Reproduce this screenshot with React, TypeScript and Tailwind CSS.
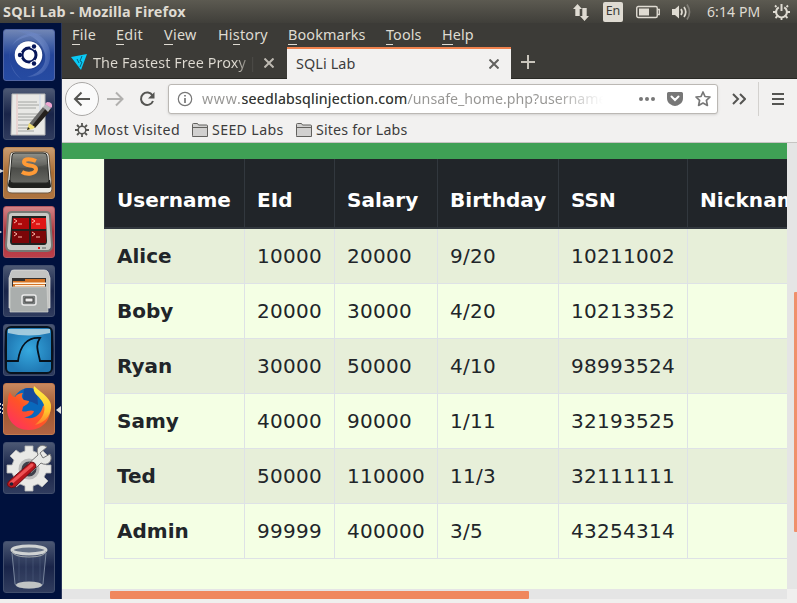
import type { ReactNode } from "react";

const employees = [
  ["Alice", "10000", "20000", "9/20", "10211002", ""],
  ["Boby", "20000", "30000", "4/20", "10213352", ""],
  ["Ryan", "30000", "50000", "4/10", "98993524", ""],
  ["Samy", "40000", "90000", "1/11", "32193525", ""],
  ["Ted", "50000", "110000", "11/3", "32111111", ""],
  ["Admin", "99999", "400000", "3/5", "43254314", ""],
];
const columns = ["Username", "EId", "Salary", "Birthday", "SSN", "Nickname"];

function TopPanel() {
  return (
    <header className="flex h-[23px] shrink-0 items-center bg-linear-to-b from-[#5c5a51] to-[#403f3a] pl-[3px] text-[#dfdbd2]">
      <div className="w-[569px] text-[14.4px] leading-[22px] font-bold tracking-[0.2px] whitespace-nowrap">SQLi Lab - Mozilla Firefox</div>
      <svg width="18" height="18" viewBox="0 0 18 18" fill="currentColor" className="shrink-0">
        <path d="M5.5 1 10 6H7.700v7H3.300V6H1zM12.500 18 8 13h2.300V5h4.400v8H17z" />
      </svg>
      <div className="ml-[13px] flex h-5 w-5 shrink-0 items-center justify-center rounded-[2px] bg-[#dfdbd2] text-[12.500px] text-[#3c3b37]">En</div>
      <svg width="25" height="14" viewBox="0 0 25 14" className="ml-[13px] shrink-0">
        <rect x=".75" y="1.500" width="20.500" height="11" rx="1.500" fill="none" stroke="#dfdbd2" strokeWidth="1.400" />
        <path d="M3 3.500h10v7H3z" fill="#dfdbd2" />
        <path d="M22 4.500h1.300v5H22" fill="none" stroke="#dfdbd2" strokeWidth="1.300" />
      </svg>
      <svg width="20" height="18" viewBox="0 0 20 18" fill="none" stroke="#dfdbd2" strokeWidth="1.700" className="ml-[11px] shrink-0">
        <path d="M0 6h3l4-3.500v13L3 12H0z" fill="#dfdbd2" stroke="none" />
        <path d="M9 6q2 3 0 6M12 4q3.500 5 0 10" />
        <path d="M15 1.500q5 7.500 0 15" stroke="#817e77" />
      </svg>
      <div className="ml-[15px] w-[66px] text-[14px] leading-[22px] tracking-[0.1px] whitespace-nowrap">6:14 PM</div>
      <svg width="17" height="18" viewBox="0 0 17 18" fill="none" stroke="#dfdbd2" className="shrink-0">
        <path d="M5.800 4.300a5.400 5.400 0 1 0 5.400 0" strokeWidth="2" />
        <path d="M8.500 1v7" strokeWidth="2" />
        <path d="M3.500 4 2 2.500m11.500 1.500L15 2.500M3 9H0m17 0h-3M4.500 13 2.500 15m10-2 2 2M8.500 14v3" strokeWidth="1.800" />
      </svg>
    </header>
  );
}

function Tile({ tone, children, className = "" }: { tone: string; children: ReactNode; className?: string }) {
  return (
    <div className={`relative h-[52px] w-[52px] shrink-0 rounded-[3px] border bg-linear-to-b ${tone} ${className}`}>
      <svg width="50" height="50" viewBox="0 0 50 50" className="overflow-visible">{children}</svg>
    </div>
  );
}

const slate = "border-[#414e6c] from-[#4c5873] via-[#192449] to-[#303c5e]";

function Launcher() {
  return (
    <aside className="flex h-[576px] w-[62px] shrink-0 flex-col gap-[7px] border-r border-[#29365a] bg-[#00113d] pt-[6px] pl-[3px]">
      <Tile tone="border-[#5065a4] from-[#7186b5] via-[#24459a] to-[#264ba2]">
        <defs>
          <radialGradient id="swirl">
            <stop stopColor="#a4b8e5" />
            <stop offset="1" stopColor="#6b86c8" stopOpacity=".45" />
          </radialGradient>
        </defs>
        <path d="M13 1c17-3 36 9 33 28-2 13-12 18-23 18 16-5 21-15 17-26C36 9 25 4 13 1z" fill="url(#swirl)" opacity=".8" />
        <path d="M8 16C2 29 8 40 17 49 7 42 2 27 9 14 15 4 30 1 38 5 23 5 12 9 8 16z" fill="url(#swirl)" />
        <circle cx="25" cy="25" r="14.500" fill="#182d6b" opacity=".45" />
        <circle cx="24.500" cy="25" r="13.800" fill="white" />
        <circle cx="25" cy="25" r="7" fill="none" stroke="#07175a" strokeWidth="3" />
        <path d="M18 25h-4M28.500 18.900l2-3.400M28.500 31.100l2 3.400" stroke="white" strokeWidth="5.500" />
        <g fill="#07175a">
          <circle cx="16" cy="25" r="2.200" />
          <circle cx="30" cy="16.500" r="2.200" />
          <circle cx="30" cy="33.500" r="2.200" />
        </g>
      </Tile>
      <Tile tone={slate}>
        <path d="M8 5h33v41H7z" fill="#e8e8e5" stroke="#b7b9b8" />
        <path d="M13 5v41" stroke="#e9aaaa" strokeWidth=".6" />
        <path d="M36 5v25" stroke="#b9ccee" strokeWidth=".6" />
        <path d="M14 13h19m-19 3h21m-21 3h18m-18 6h20m-20 3h17m-17 3h20m-20 5h15m-15 3h14m-14 3h16" stroke="#929493" strokeWidth=".8" />
        <path d="m25 35 14-17 5 3-14 17z" fill="#686867" />
        <path d="m27 38 16-20 4 3-16 18z" fill="#25211d" />
        <path d="m39 18 3-3 5 4-3 4z" fill="#b7b9bd" />
        <path d="m41 15 2-2q6 0 5 5l-1 1z" fill="#efa6d0" />
        <path d="m23 41 2-7 6 4-2 2z" fill="#f0df76" />
        <path d="m23 41 1-3 2 2z" fill="#222" />
      </Tile>
      <Tile tone="border-[#ba8650] from-[#c99c70] via-[#a96c32] to-[#ad7440]">
        <defs>
          <linearGradient id="keycap" x2="0" y2="1"><stop stopColor="#92938c" /><stop offset=".5" stopColor="#4b4c48" /><stop offset="1" stopColor="#666762" /></linearGradient>
        </defs>
        <path d="M6 7q0-3 4-3h31q3 0 4 3l3 34q0 4-4 4H8q-5 0-5-4z" fill="#ebeae5" stroke="#6d5943" />
        <path d="M5 32h41l1 6q0 2-3 2H8q-4 0-4-3z" fill="#20211e" />
        <path d="M8 8q0-3 3-3h28q4 0 4 3l2 25q0 2-3 2H9q-3 0-3-3z" fill="url(#keycap)" stroke="#292a27" />
        <path d="M8 12q16 2 35-3l1 7q-18 6-37 3z" fill="#aaaaa4" opacity=".15" />
        <path d="M32 13c-4-2-12-3-12 1 0 5 12 2 12 7 0 5-9 6-14 3" fill="none" stroke="#ff9a36" strokeWidth="4" />
        <path d="m0 23-4-2v4z" fill="#d5d5d5" />
      </Tile>
      <Tile tone="border-[#b25761] from-[#d18387] via-[#a82e39] to-[#bb3f49]">
        <path d="M8 5h34q4 0 4 4l2 29q0 6-5 6H7q-5 0-5-6L4 9q0-4 4-4z" fill="#c8c9c4" stroke="#777873" strokeWidth="2" />
        <path d="M8 9h34v3l1 22q0 4-3 4H9q-3 0-3-4z" fill="#202220" />
        <path d="M9 11h16v11H8z" fill="#ad080b" />
        <path d="M27 11h15v11H27z" fill="#e01716" />
        <path d="M8 24h17v12H8zM27 24h15v12H27z" fill="#7b0608" />
        <g fill="none" stroke="#ffb6a8" strokeWidth="1">
          <path d="m10 12 3 2-3 2m4 1h4M28 12l3 2-3 2m4 1h4M10 25l3 2-3 2m4 1h4M28 25l3 2-3 2m4 1h4" />
        </g>
        <path d="M34 41h2" stroke="#ed1915" strokeWidth="2" />
        <path d="M38 41h4" stroke="#929490" strokeWidth="2" />
        <path d="m-2 25-3-2v4z" fill="#d5d5d5" />
      </Tile>
      <Tile tone={slate}>
        <path d="M7 6q0-2 3-2h30q3 0 4 2l2 6v30H5V12z" fill="#c3c4c2" stroke="#e4e5e3" strokeWidth=".7" />
        <path d="M8 12h34v14H8z" fill="#34312f" />
        <path d="M9 15h12v-2h20v10H9z" fill="#d57324" />
        <path d="M9 16.500h33V18H9zM11 19h30v1.500H11z" fill="#fff0dd" />
        <path d="M6 21h37l1 25H6z" fill="#aaaead" stroke="#d4d5d3" strokeWidth=".7" />
        <rect x="18" y="29" width="14" height="10" rx="2" fill="#777b7b" stroke="#ececec" strokeWidth="1.500" />
        <path d="M21 32h8v4h-8z" fill="#eee" stroke="#444" />
      </Tile>
      <Tile tone={slate}>
        <defs><radialGradient id="ocean"><stop stopColor="#36a9df" /><stop offset="1" stopColor="#2079b4" /></radialGradient></defs>
        <rect x="2" y="2" width="46" height="46" rx="5" fill="url(#ocean)" stroke="#07121d" strokeWidth="2" />
        <path d="M4 4h42v4Q25 13 4 8z" fill="#c1dce5" opacity=".8" />
        <path d="M3 36h11C16 20 24 12 36 13c-5 7-2 13 0 23h12" fill="none" stroke="#07121d" strokeWidth="1.800" />
      </Tile>
      <Tile tone="border-[#c1794d] from-[#c8885f] via-[#9f582f] to-[#b26444]">
        <defs>
          <linearGradient id="fox" x1="0" y1="1" x2="1" y2="0"><stop stopColor="#ff286e" /><stop offset=".5" stopColor="#ff5426" /><stop offset="1" stopColor="#ff9a24" /></linearGradient>
          <linearGradient id="tail" x2="0" y2="1"><stop stopColor="#fff044" /><stop offset=".65" stopColor="#ffc52d" /><stop offset="1" stopColor="#ff792b" /></linearGradient>
        </defs>
        <circle cx="25" cy="20" r="16" fill="#0968bc" />
        <path d="M20 5q8-3 13 3l1 13-6-3-9-2z" fill="#154a9b" />
        <path d="M6 8c1 3 3 5 5 5 2-3 5-4 8-4-2 3-1 5 1 7l5 1c0 3-4 4-6 6l-1 4c4 2 7-2 12 0-1 4-6 6-10 6 9 4 17-2 19-11l7-4c3 17-7 28-21 28C10 46 0 34 4 18c0-4 0-7 2-10z" fill="url(#fox)" />
        <path d="M30 2c-2 7 4 9 8 15 6 9 0 18-7 24 9-2 15-8 16-17C48 15 40 11 30 2z" fill="url(#tail)" />
        <path d="m57 22-5 4 5 4z" fill="#ddd" />
        <path d="M-3.500 19v2m0 2v2m0 2v2m2-9v2m0 2v2m0 2v2" stroke="#d5d5d5" />
      </Tile>
      <Tile tone={slate}>
        <g stroke="#b8b9b7" strokeWidth=".8">
          <path d="M21 3h8v5l5 2 4-3 6 6-4 4 2 5h5v8h-5l-2 4 4 4-6 6-4-3-5 2v5h-8v-5l-5-2-4 3-6-6 4-4-2-4H3v-8h5l2-5-4-4 6-6 4 3 5-2z" fill="#e9e9e6" />
          <circle cx="25" cy="26" r="9" fill="#3e404b" stroke="#bbb" strokeWidth="3" />
        </g>
        <path d="m24 21 10-9c-3-8 3-12 9-8l-7 6 3 5 7-4c4 7-3 13-9 9L27 30z" fill="#e7e8e5" stroke="#777" />
        <path d="M5 38 27 19q5 0 5 5L11 44q-4 2-7-1-2-2 1-5z" fill="#ba171d" stroke="#681019" />
        <path d="m7 40 21-18" stroke="#ee5355" strokeWidth="3" strokeLinecap="round" />
        <circle cx="7.500" cy="41" r="1.800" fill="#202236" />
      </Tile>
      <Tile tone={slate} className="mt-10">
        <path d="m8 11 3 31q1 4 14 4t14-4l3-31" fill="#8795a8" fillOpacity=".15" stroke="#77849b" />
        <path d="M15 13v26M22 13v26M29 13v26M36 13v26" stroke="#536180" strokeWidth=".5" />
        <ellipse cx="25" cy="8" rx="17" ry="4" fill="#647085" stroke="#d0d3d3" strokeWidth="3" />
        <path d="M8 9q1 6 17 6t17-6" fill="none" stroke="#a4aaad" />
        <ellipse cx="25" cy="43" rx="13" ry="3.500" fill="#c1c4c4" />
      </Tile>
    </aside>
  );
}

function MenuItem({ initial, rest, before = "", width }: { initial: string; rest: string; before?: string; width: string }) {
  return (
    <span className={`shrink-0 whitespace-nowrap ${width}`}>
      {before}<span className="border-b border-[#dfdbd2] leading-[16px]">{initial}</span>{rest}
    </span>
  );
}

function Close({ className }: { className: string }) {
  return <svg width="10" height="10" viewBox="0 0 10 10" className={`shrink-0 ${className}`} stroke="currentColor" strokeWidth="2"><path d="m.5.5 9 9m0-9-9 9" /></svg>;
}

function Tabs() {
  return (
    <div className="flex h-8 shrink-0 border-b border-[#292925] text-[14.400px] text-[#dfdbd2]">
      <div className="flex w-[225px] shrink-0 items-center pl-[9px]">
        <svg width="17" height="17" viewBox="0 0 17 17" className="shrink-0">
          <path d="m0 3 16-3-6 16z" fill="#0acaf5" />
          <path d="m11 2-2 5 2 1-2 5m-3-8 2 4" stroke="#066583" fill="none" />
        </svg>
        <div className="ml-[5px] w-[162px] overflow-hidden bg-linear-to-r from-[#dfdbd2] from-88% to-[#3c3b37] bg-clip-text tracking-[0.08px] whitespace-nowrap text-transparent">The Fastest Free Proxy<span className="-ml-px">{" "}|</span></div>
        <Close className="ml-[9px] text-[#bdb9b1]" />
      </div>
      <div className="-mb-px flex w-[224px] shrink-0 items-center border-t-2 border-[#f0824e] bg-[#f2f1f0] pr-[12px] pb-[1px] pl-[9px] text-[#3c3c3c]">
        <span className="flex-1 tracking-[0.1px]">SQLi Lab</span>
        <Close className="text-[#62625f]" />
      </div>
      <svg width="14" height="14" viewBox="0 0 14 14" className="mt-[8px] ml-[10px]" stroke="#c9c5bc" strokeWidth="2"><path d="M7 0v14M0 7h14" /></svg>
    </div>
  );
}

function Folder() {
  return <svg width="16" height="14" viewBox="0 0 16 14" className="mr-1 shrink-0" fill="#d1d0cf" stroke="#62615e"><path d="M.5 12.500v-11q0-1 1-1h4l1 1.500h8q1 0 1 1v10.500H.5zM.5 4.500h15" /></svg>;
}

function Toolbars() {
  return (
    <div className="h-16 shrink-0 border-b border-[#c6c4c2] bg-[#f2f1f0]">
      <div className="flex h-10 items-center pl-[3px] text-[#555552]">
        <div className="flex h-[34px] w-[34px] shrink-0 items-center justify-center rounded-full border border-[#aaa8a6] bg-[#fafafa]">
          <svg width="18" height="16" viewBox="0 0 18 16" fill="none" stroke="currentColor" strokeWidth="2"><path d="M17 8H2m6.500-6.500L2 8l6.500 6.500" /></svg>
        </div>
        <svg width="18" height="16" viewBox="0 0 18 16" className="ml-[8px] shrink-0" fill="none" stroke="#b1b0ae" strokeWidth="2"><path d="M0 8h15M9 1.500 15.500 8 9 14.500" /></svg>
        <svg width="16" height="16" viewBox="0 0 16 16" className="ml-[14px] shrink-0" fill="none" stroke="currentColor" strokeWidth="2"><path d="M13.500 4.500A6.200 6.200 0 1 0 14 10" /><path d="M15.500 1v6.500H9z" fill="currentColor" stroke="none" /></svg>
        <div className="ml-[13px] flex h-[30px] w-[550px] shrink-0 items-center rounded-[3px] border border-[#bbb8b4] bg-white pr-[6px] pl-[8px] shadow-sm">
          <svg width="16" height="16" viewBox="0 0 16 16" fill="none" stroke="#777" strokeWidth="1.200"><circle cx="8" cy="8" r="6.700" /><path d="M8 7v5M8 4v1.500" strokeWidth="1.700" /></svg>
          <div className="ml-[9px] w-[401px] overflow-hidden bg-linear-to-r from-[#969593] from-88% to-transparent bg-clip-text text-[14.200px] whitespace-nowrap text-transparent"><span className="tracking-[0.7px]">www.</span><span className="tracking-[0.24px] text-[#333]">seedlabsqlinjection.com</span>/unsafe_home.php?username</div>
          <svg width="16" height="4" viewBox="0 0 16 4" className="ml-auto" fill="#777"><circle cx="2" cy="2" r="2" /><circle cx="8" cy="2" r="2" /><circle cx="14" cy="2" r="2" /></svg>
          <svg width="16" height="14" viewBox="0 0 16 14" className="ml-3"><path d="M1.500 0h13Q16 0 16 1.500V6q0 4-3 6-5 4-10 0-3-2-3-6V1.500Q0 0 1.500 0z" fill="#777" /><path d="m4.500 4.500 3.500 3.500 3.500-3.500" fill="none" stroke="white" strokeWidth="2" strokeLinecap="round" /></svg>
          <svg width="16" height="16" viewBox="0 0 16 16" className="ml-3" fill="none" stroke="#777" strokeWidth="1.700" strokeLinejoin="round"><path d="m8 1 2 4.500 5 .5-3.600 3.400 1 5L8 12l-4.400 2.400 1-5L1 6l5-.5z" /></svg>
        </div>
        <svg width="14" height="12" viewBox="0 0 14 12" className="ml-[14px] shrink-0" fill="none" stroke="currentColor" strokeWidth="2"><path d="m1 1 5 5-5 5m7-10 5 5-5 5" /></svg>
        <div className="ml-3 h-[34px] w-px shrink-0 bg-[#d3d1ce]" />
        <svg width="12" height="12" viewBox="0 0 12 12" className="ml-[13px] shrink-0" stroke="currentColor" strokeWidth="2"><path d="M0 1h12M0 6h12M0 11h12" /></svg>
      </div>
      <div className="flex h-[22px] items-center pl-[13px] text-[14.200px] whitespace-nowrap text-[#3c3c3c]">
        <svg width="14" height="14" viewBox="0 0 14 14" className="mr-[5px] shrink-0" fill="none" stroke="#555552"><circle cx="7" cy="7" r="3.800" strokeWidth="1.500" /><path d="M7 3V0m0 14v-3M0 7h3m8 0h3M2 2l2 2m6 6 2 2m0-10-2 2m-6 6-2 2" strokeWidth="1.800" /></svg>
        <span className="w-[98px] shrink-0 tracking-[0.38px]">Most Visited</span><Folder />
        <span className="w-[84px] shrink-0 tracking-[0.35px]">SEED Labs</span><Folder />
        <span className="tracking-[0.18px]">Sites for Labs</span>
      </div>
    </div>
  );
}

const widths = ["w-[140px]", "w-[90px]", "w-[103px]", "w-[121px]", "w-[129px]", "w-[150px]"];

function EmployeeTable() {
  return (
    <div className="ml-[42px] w-[733px] font-['DejaVu_Sans',sans-serif] text-[20px] leading-[30px] text-[#212529]">
      <div className="flex h-[70px] border-b-2 border-[#32383e] bg-[#212529] font-bold text-white">
        {columns.map((name, i) => <div key={name} className={`${widths[i]} shrink-0 border-l border-[#32383e] pt-[26px] pl-3 tracking-[0.03px]`}>{name}</div>)}
      </div>
      {employees.map((employee, row) => (
        <div key={employee[0]} className={`flex h-[55px] border-b border-[#dee2e6] ${row % 2 === 0 ? "bg-[#e7efd9]" : "bg-[#f4ffe4]"}`}>
          {employee.map((value, i) => <div key={i} className={`${widths[i]} shrink-0 border-l border-[#dee2e6] pt-3 pl-3 ${i === 0 ? "font-bold" : "tracking-[0.27px]"}`}>{value}</div>)}
        </div>
      ))}
    </div>
  );
}

export default function App() {
  return (
    <div className="flex h-[603px] w-[797px] flex-col overflow-hidden bg-[#f0efee] font-['Noto_Sans',sans-serif]">
      <TopPanel />
      <div className="flex h-[576px]">
        <Launcher />
        <main className="flex w-[735px] flex-col bg-[#3c3b37]">
          <nav className="flex h-6 shrink-0 items-center gap-5 pl-[10px] text-[14.400px] leading-[22px] text-[#dfdbd2]">
            <MenuItem initial="F" rest="ile" width="w-6 tracking-[0.3px]" />
            <MenuItem initial="E" rest="dit" width="w-7 tracking-[0.3px]" />
            <MenuItem initial="V" rest="iew" width="w-[34px] tracking-[0.3px]" />
            <MenuItem before="Hi" initial="s" rest="tory" width="w-[50px] tracking-[0.2px]" />
            <MenuItem initial="B" rest="ookmarks" width="w-[78px] tracking-[0.12px]" />
            <MenuItem initial="T" rest="ools" width="w-9 tracking-[0.1px]" />
            <MenuItem initial="H" rest="elp" width="w-8 tracking-[0.1px]" />
          </nav>
          <Tabs />
          <Toolbars />
          <div className="flex h-[456px]">
            <div className="flex w-[725px] flex-col overflow-hidden bg-[#f4ffe4]">
              <div className="h-4 shrink-0 bg-[#3fa055]" />
              <div className="h-[430px] shrink-0 overflow-hidden"><EmployeeTable /></div>
              <div className="h-[10px] shrink-0 bg-[#e5e5e5] pt-[2px] pl-12"><div className="h-2 w-[419px] rounded-[1px] bg-[#f0875d]" /></div>
            </div>
            <div className="w-[10px] bg-[#f0efee]"><div className="h-[446px] bg-[#e5e5e5] pt-[149px] pl-[7px]"><div className="h-60 w-[3px] rounded-l-[1px] bg-[#f0906b]" /></div></div>
          </div>
        </main>
      </div>
    </div>
  );
}
